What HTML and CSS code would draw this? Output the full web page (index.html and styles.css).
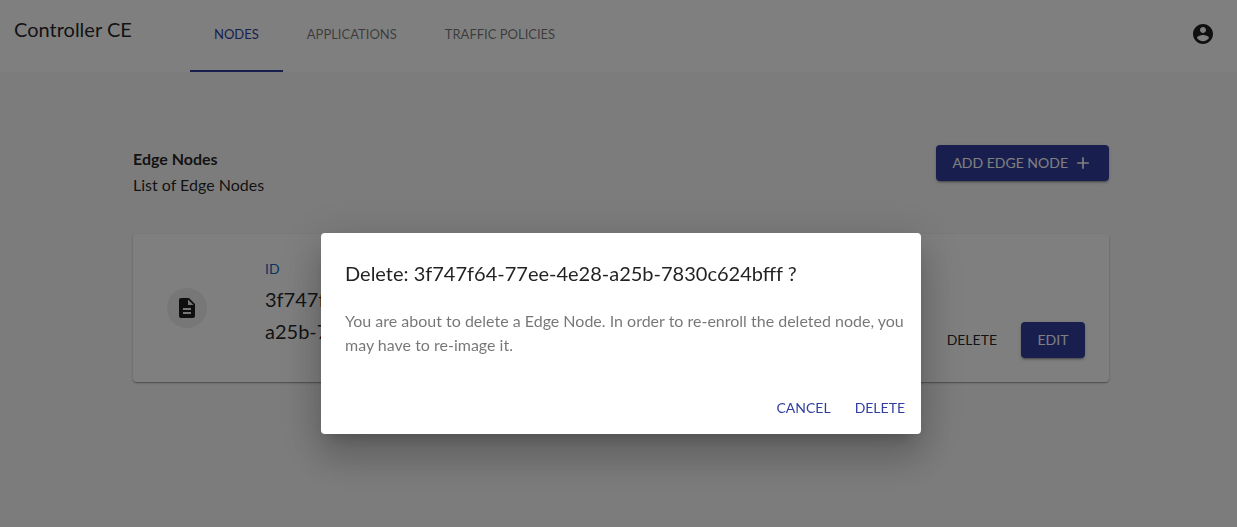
FILE: index.html
```html
<!DOCTYPE html>
<html lang="en">
<head>
  <meta charset="utf-8">
  <meta name="viewport" content="width=device-width, initial-scale=1">
  <title>Controller CE</title>
  <link rel="stylesheet" href="styles.css">
</head>
<body>
  <header class="topbar">
    <div class="brand">Controller CE</div>
    <nav class="tabs">
      <a class="tab tab-active" href="#nodes">NODES</a>
      <a class="tab" href="#applications">APPLICATIONS</a>
      <a class="tab" href="#policies">TRAFFIC POLICIES</a>
    </nav>
    <button class="account" type="button" aria-label="Account">
      <svg class="icon" viewBox="0 0 24 24" aria-hidden="true"><path d="M12 2C6.48 2 2 6.48 2 12s4.480 10 10 10 10-4.480 10-10S17.520 2 12 2zm0 3c1.660 0 3 1.340 3 3s-1.340 3-3 3-3-1.340-3-3 1.340-3 3-3zm0 14.200c-2.500 0-4.710-1.280-6-3.220.03-1.990 4-3.080 6-3.080 1.990 0 5.970 1.090 6 3.080-1.290 1.940-3.500 3.220-6 3.220z"/></svg>
    </button>
  </header>

  <main class="content">
    <div class="heading">
      <div class="heading-text">
        <h1 class="title">Edge Nodes</h1>
        <p class="subtitle">List of Edge Nodes</p>
      </div>
      <button class="button button-filled" type="button">ADD EDGE NODE
        <svg class="icon-add" viewBox="0 0 24 24" aria-hidden="true"><path d="M19 13h-6v6h-2v-6H5v-2h6V5h2v6h6v2z"/></svg>
      </button>
    </div>

    <article class="card">
      <div class="avatar">
        <svg class="icon" viewBox="0 0 24 24" aria-hidden="true"><path d="M14 2H6c-1.100 0-1.990.9-1.990 2L4 20c0 1.100.89 2 1.990 2H18c1.100 0 2-.9 2-2V8l-6-6zm2 16H8v-2h8v2zm0-4H8v-2h8v2zm-3-5V3.500L18.500 9H13z"/></svg>
      </div>
      <div class="node">
        <div class="node-label">ID</div>
        <div class="node-id">3f747f64-77ee-4e28-a25b-7830c624bfff</div>
      </div>
      <div class="card-actions">
        <button class="button button-text" type="button">DELETE</button>
        <button class="button button-filled" type="button">EDIT</button>
      </div>
    </article>
  </main>

  <div class="overlay">
    <section class="dialog" role="dialog" aria-modal="true" aria-labelledby="dialog-title" aria-describedby="dialog-text">
      <h2 class="dialog-title" id="dialog-title">Delete: 3f747f64-77ee-4e28-a25b-7830c624bfff ?</h2>
      <p class="dialog-text" id="dialog-text">You are about to delete a Edge Node. In order to re-enroll the deleted node, you may have to re-image it.</p>
      <div class="dialog-actions">
        <button class="button button-primary" type="button">CANCEL</button>
        <button class="button button-primary" type="button">DELETE</button>
      </div>
    </section>
  </div>
</body>
</html>
```
FILE: styles.css
```css
* {
  box-sizing: border-box;
}

body {
  margin: 0;
  min-height: 100vh;
  background: #f9f9f9;
  color: rgba(0, 0, 0, 0.87);
  font-family: Lato, sans-serif;
  font-size: 16px;
}

h1,
h2,
p {
  margin: 0;
}

button {
  border: 0;
  font: inherit;
  color: inherit;
  cursor: pointer;
}

.icon {
  display: block;
  width: 24px;
  height: 24px;
  fill: currentColor;
}

.topbar {
  display: flex;
  align-items: flex-start;
  height: 72px;
  padding-right: 22px;
  background: #fff;
}

.brand {
  width: 190px;
  padding: 14px 14px 0;
  font-size: 20px;
  line-height: 30px;
}

.tabs {
  display: flex;
  flex: 1;
  height: 100%;
}

.tab {
  padding: 24px 24px 0;
  border-bottom: 2px solid transparent;
  color: rgba(0, 0, 0, 0.54);
  font-size: 13px;
  line-height: 20px;
  text-decoration: none;
}

.tab-active {
  border-color: #303f9f;
  color: #303f9f;
}

.account {
  padding: 0;
  margin-top: 22px;
  background: none;
}

.content {
  padding: 73px 128px 0 133px;
}

.heading {
  display: flex;
  align-items: flex-start;
  justify-content: space-between;
  margin-bottom: 37px;
}

.title {
  font-size: 16px;
  font-weight: 700;
  line-height: 28px;
}

.subtitle {
  line-height: 24px;
}

.button {
  display: inline-flex;
  align-items: center;
  justify-content: center;
  min-width: 64px;
  height: 36px;
  padding: 0 16px;
  border-radius: 4px;
  font-size: 14px;
  line-height: 24px;
}

.button-filled {
  background: #303f9f;
  color: #fff;
  box-shadow: 0 3px 1px -2px rgba(0, 0, 0, 0.2), 0 2px 2px rgba(0, 0, 0, 0.14), 0 1px 5px rgba(0, 0, 0, 0.12);
}

.button-text,
.button-primary {
  padding: 0 8px;
  background: none;
}

.button-primary {
  color: #303f9f;
}

.icon-add {
  width: 20px;
  height: 20px;
  margin-left: 5px;
  fill: currentColor;
}

.card {
  display: flex;
  align-items: center;
  padding: 24px;
  border-radius: 4px;
  background: #fff;
  box-shadow: 0 1px 3px rgba(0, 0, 0, 0.2), 0 1px 1px rgba(0, 0, 0, 0.14), 0 2px 1px -1px rgba(0, 0, 0, 0.12);
}

.avatar {
  display: grid;
  place-items: center;
  width: 40px;
  height: 40px;
  margin: 0 58px 0 10px;
  border-radius: 50%;
  background: #eee;
}

.node {
  width: 220px;
  padding-bottom: 11px;
}

.node-label {
  margin-bottom: 3px;
  color: #1565c0;
  font-size: 14px;
  line-height: 22px;
}

.node-id {
  font-size: 20px;
  line-height: 32px;
}

.card-actions {
  display: flex;
  align-self: flex-end;
  gap: 16px;
  margin-left: auto;
}

.overlay {
  position: fixed;
  inset: 0;
  display: flex;
  align-items: center;
  justify-content: center;
  padding: 140px 0 0 5px;
  background: rgba(0, 0, 0, 0.5);
}

.dialog {
  width: 100%;
  max-width: 600px;
  border-radius: 4px;
  background: #fff;
  box-shadow: 0 11px 15px -7px rgba(0, 0, 0, 0.2), 0 24px 38px 3px rgba(0, 0, 0, 0.14), 0 9px 46px 8px rgba(0, 0, 0, 0.12);
}

.dialog-title {
  padding: 24px 24px 20px;
  font-size: 20px;
  font-weight: 400;
  line-height: 32px;
}

.dialog-text {
  padding: 0 8px 24px 24px;
  color: rgba(0, 0, 0, 0.54);
  line-height: 24px;
}

.dialog-actions {
  display: flex;
  justify-content: flex-end;
  gap: 8px;
  padding: 8px;
  margin-top: 1px;
}
```
